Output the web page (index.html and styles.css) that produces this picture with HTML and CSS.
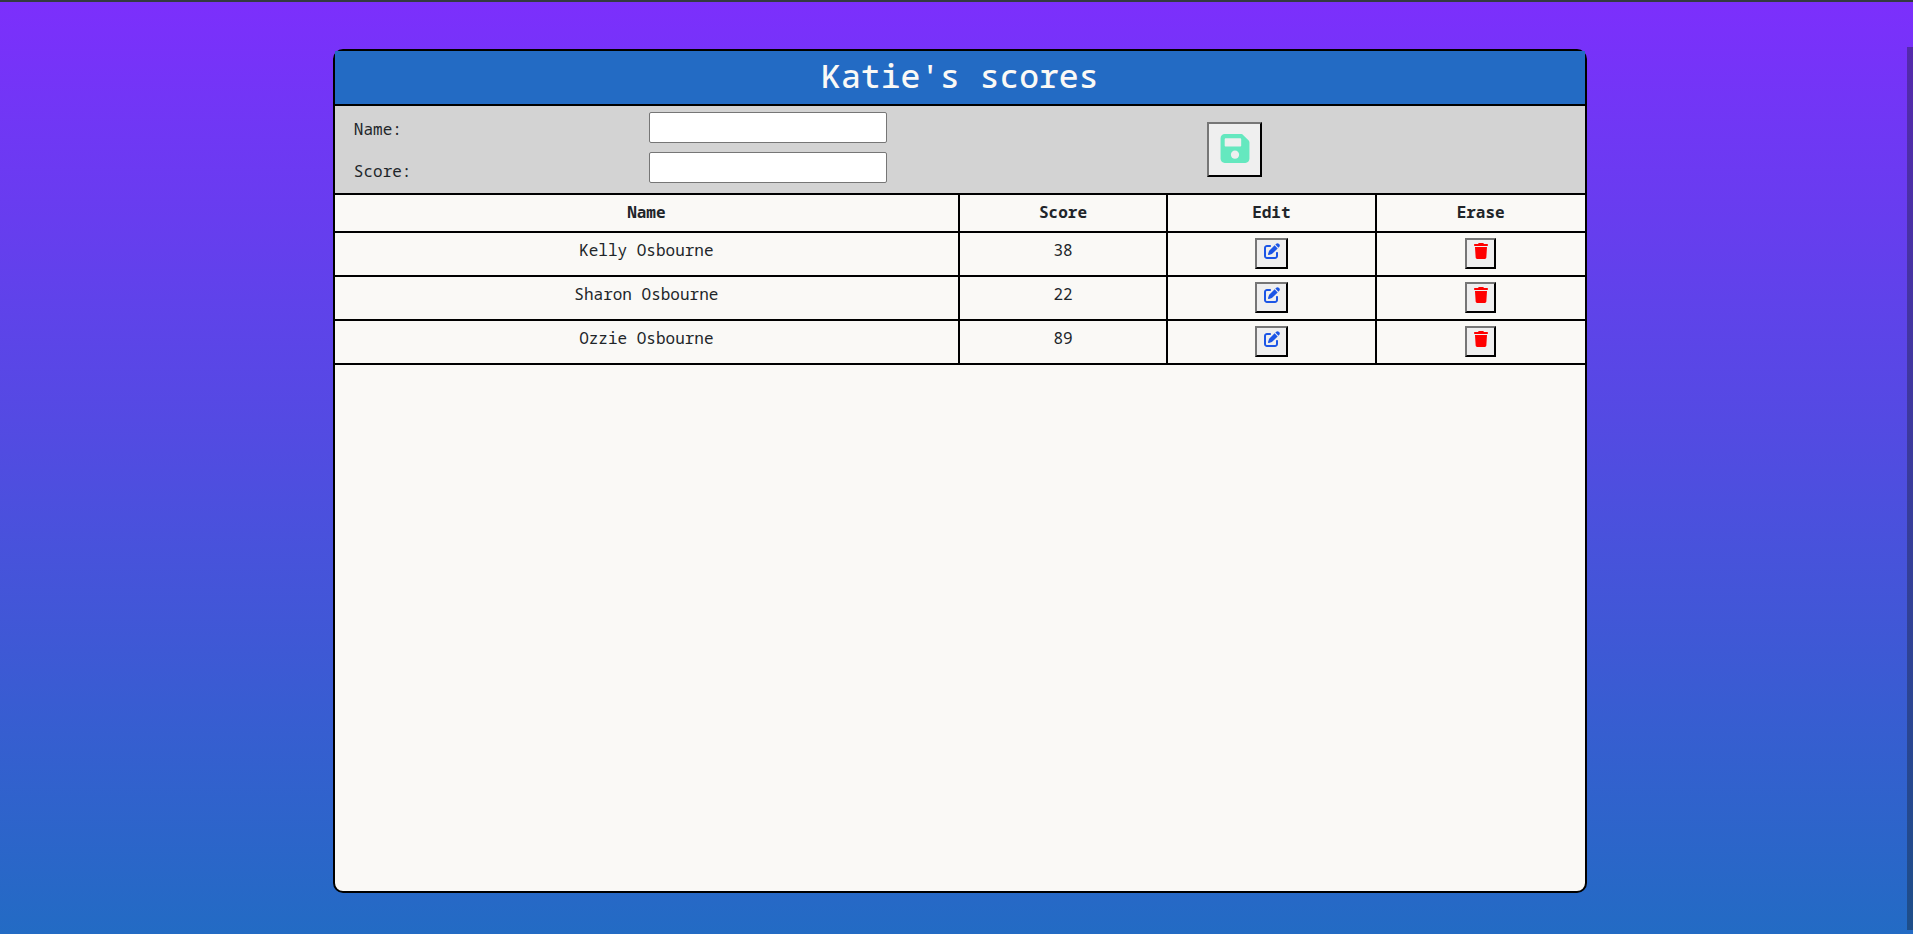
FILE: index.html
```html
<!DOCTYPE html>
<html lang="en">
<head>
<meta charset="utf-8">
<meta name="viewport" content="width=device-width, initial-scale=1">
<title>Katie's scores</title>
<link rel="stylesheet" href="styles.css">
</head>
<body>
<svg class="sprite" aria-hidden="true">
  <symbol id="save" viewBox="0 0 448 512"><path d="M433.1 129.1l-83.9-83.9C342.3 38.32 327.1 32 316.1 32H64C28.65 32 0 60.65 0 96v320c0 35.35 28.65 64 64 64h320c35.35 0 64-28.65 64-64V163.9C448 152.9 441.7 137.7 433.1 129.1zM224 416c-35.34 0-64-28.66-64-64s28.66-64 64-64s64 28.66 64 64S259.3 416 224 416zM320 208C320 216.8 312.8 224 304 224h-224C71.16 224 64 216.8 64 208v-96C64 103.2 71.16 96 80 96h224C312.8 96 320 103.2 320 112V208z"/></symbol>
  <symbol id="edit" viewBox="0 0 512 512"><path d="M490.3 40.4C512.2 62.27 512.2 97.73 490.3 119.6L460.3 149.7L362.3 51.72L392.4 21.66C414.3-.2135 449.7-.2135 471.6 21.66L490.3 40.4zM172.4 241.7L339.7 74.34L437.7 172.3L270.3 339.6C264.2 345.8 256.7 350.4 248.4 353.2L159.6 382.8C150.1 385.6 141.5 383.4 135 376.1C128.6 370.5 126.4 361 129.2 352.4L158.8 263.6C161.6 255.3 166.2 247.8 172.4 241.7V241.7zM192 63.1C209.7 63.1 224 78.33 224 95.1C224 113.7 209.7 127.1 192 127.1H96C78.33 127.1 64 142.3 64 159.1V416C64 433.7 78.33 448 96 448H352C369.7 448 384 433.7 384 416V319.1C384 302.3 398.3 287.1 416 287.1C433.7 287.1 448 302.3 448 319.1V416C448 469 405 512 352 512H96C42.98 512 0 469 0 416V159.1C0 106.1 42.98 63.1 96 63.1H192z"/></symbol>
  <symbol id="trash" viewBox="0 0 448 512"><path d="M135.2 17.69C140.6 6.848 151.7 0 163.8 0H284.2C296.3 0 307.4 6.848 312.8 17.69L320 32H416C433.7 32 448 46.33 448 64C448 81.67 433.7 96 416 96H32C14.33 96 0 81.67 0 64C0 46.33 14.33 32 32 32H128L135.2 17.69zM394.8 466.1C393.2 492.3 372.3 512 346.9 512H101.1C75.75 512 54.77 492.3 53.19 466.1L31.1 128H416L394.8 466.1z"/></symbol>
</svg>
<main class="card">
  <h1 class="title">Katie's scores</h1>
  <form class="form">
    <div class="labels">
      <label for="name">Name:</label>
      <label for="score">Score:</label>
    </div>
    <div class="fields">
      <input class="field" id="name" type="text">
      <input class="field" id="score" type="text">
    </div>
    <button class="button save" type="button" aria-label="Save"><svg class="save-icon"><use href="#save"/></svg></button>
  </form>
  <table class="scores">
    <thead>
      <tr><th class="wide">Name</th><th>Score</th><th>Edit</th><th>Erase</th></tr>
    </thead>
    <tbody>
      <tr>
        <td>Kelly Osbourne</td><td>38</td>
        <td><button class="button edit" type="button" aria-label="Edit Kelly Osbourne"><svg class="edit-icon"><use href="#edit"/></svg></button></td>
        <td><button class="button erase" type="button" aria-label="Erase Kelly Osbourne"><svg class="trash-icon"><use href="#trash"/></svg></button></td>
      </tr>
      <tr>
        <td>Sharon Osbourne</td><td>22</td>
        <td><button class="button edit" type="button" aria-label="Edit Sharon Osbourne"><svg class="edit-icon"><use href="#edit"/></svg></button></td>
        <td><button class="button erase" type="button" aria-label="Erase Sharon Osbourne"><svg class="trash-icon"><use href="#trash"/></svg></button></td>
      </tr>
      <tr>
        <td>Ozzie Osbourne</td><td>89</td>
        <td><button class="button edit" type="button" aria-label="Edit Ozzie Osbourne"><svg class="edit-icon"><use href="#edit"/></svg></button></td>
        <td><button class="button erase" type="button" aria-label="Erase Ozzie Osbourne"><svg class="trash-icon"><use href="#trash"/></svg></button></td>
      </tr>
    </tbody>
  </table>
</main>
<div class="scroll-thumb"></div>
</body>
</html>
```
FILE: styles.css
```css
* {
  box-sizing: border-box;
}

body {
  display: flex;
  min-height: 100vh;
  margin: 0;
  padding: 47px 17.05% 41px 17.4%;
  border-top: 2px solid #343a40;
  background: linear-gradient(#7c2ffc, #236bc4);
  color: #212529;
  font: 16px/24px "Noto Sans Mono", "DejaVu Sans Mono", monospace;
}

.sprite {
  position: absolute;
  width: 0;
  height: 0;
}

.card {
  flex: 1;
  border: 2px solid #000;
  border-radius: 10px;
  background: #faf9f6;
}

.title {
  margin: 0;
  padding: 5px 0 8px;
  border-bottom: 2px solid #000;
  background: #236bc4;
  color: #faf9f6;
  font-size: 33px;
  font-weight: 500;
  line-height: 40px;
  text-align: center;
}

.form {
  display: grid;
  grid-template-columns: 24% 238px 1fr;
  align-items: center;
  padding: 6px 3px 6px 19px;
  border-bottom: 2px solid #000;
  background: #d3d3d3;
}

.labels {
  display: grid;
  row-gap: 18px;
}

.fields {
  display: grid;
  row-gap: 9px;
  padding-bottom: 4px;
}

.field {
  width: 100%;
  height: 31px;
  padding: 1px 4px;
  border: 1px solid #767676;
  border-radius: 2px;
  background: #fff;
  font: inherit;
}

.button {
  border: 2px outset #212529;
  border-color: #767676 #212121 #212121 #767676;
  background: #efefef;
}

.button svg {
  display: block;
  fill: currentColor;
}

.save {
  justify-self: center;
  width: 55px;
  height: 55px;
  padding: 8px 10px 10px 11px;
  color: #65e8bf;
}

.save-icon {
  width: 30px;
  height: 33px;
}

.scores {
  width: 100%;
  border-spacing: 0;
  table-layout: fixed;
  text-align: center;
}

.scores th,
.scores td {
  padding: 5px 0;
  border-right: 2px solid #000;
  border-bottom: 2px solid #000;
  vertical-align: top;
}

.scores th {
  height: 38px;
}

.scores td {
  height: 44px;
}

.scores th:last-child,
.scores td:last-child {
  border-right: 0;
}

.wide {
  width: 50%;
}

.edit,
.erase {
  display: block;
  height: 31px;
  margin: 0 auto;
  padding: 3px 6px 8px 7px;
}

.edit {
  color: #1b55e6;
}

.erase {
  color: #f00;
}

.edit-icon {
  width: 16px;
  height: 16px;
}

.trash-icon {
  width: 14px;
  height: 16px;
}

.scroll-thumb {
  position: fixed;
  top: 47px;
  right: 0;
  bottom: 4px;
  width: 6px;
  background: rgba(20, 25, 30, 0.35);
}
```
